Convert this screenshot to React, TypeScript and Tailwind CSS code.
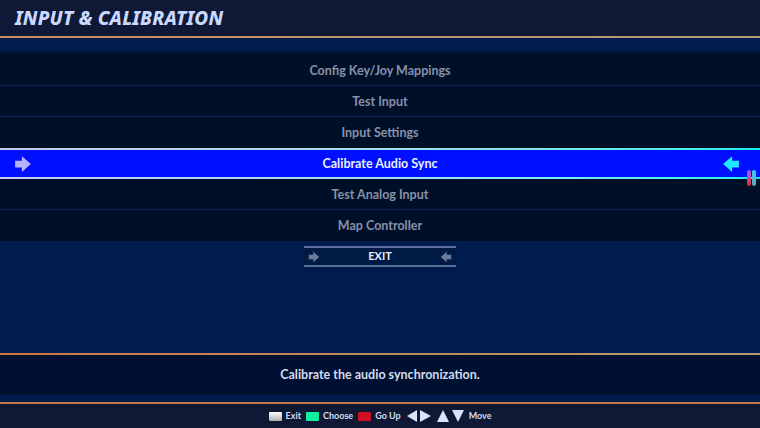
import React from "react";

// ── Input & Calibration menu screen

const items = [
  "Config Key/Joy Mappings",
  "Test Input",
  "Input Settings",
  "Calibrate Audio Sync",
  "Test Analog Input",
  "Map Controller",
];
const selected = 3;

const ArrowRight = ({ className }: { className?: string }) => (
  <svg viewBox="0 0 16 16" className={className}>
    <path d="M1 5h6V1l8 7-8 7v-4H1z" fill="currentColor" />
  </svg>
);

const ArrowLeft = ({ className }: { className?: string }) => (
  <svg viewBox="0 0 16 16" className={className}>
    <path d="M15 5H9V1L1 8l8 7v-4h6z" fill="currentColor" />
  </svg>
);

const Key = ({ color }: { color: string }) => (
  <span className={`inline-block h-[9px] w-[13px] rounded-[1px] ${color}`} />
);

const App = () => {
  return (
    <div
      className="relative flex h-[428px] w-[760px] flex-col overflow-hidden bg-[#001c4e] text-white"
      style={{ fontFamily: 'Lato, "Noto Sans", sans-serif' }}
    >
      {/* header */}
      <div className="flex h-[36px] shrink-0 items-center bg-[#0f1936] px-[15px]">
        <h1
          className="text-[19px] font-extrabold italic tracking-[0.01em] text-[#c8d8ff]"
          style={{ fontFamily: '"Noto Sans", sans-serif' }}
        >
          INPUT &amp; CALIBRATION
        </h1>
      </div>
      <div className="h-[2px] shrink-0 bg-gradient-to-r from-[#c88a64] to-[#b39c73]" />
      <div className="h-[17px] shrink-0 bg-gradient-to-b from-[#001c4e] from-70% to-[#000d26]" />

      {/* menu */}
      <div className="flex shrink-0 flex-col bg-[#000f28]">
        {items.map((label, i) =>
          i === selected ? (
            <div
              key={label}
              className="relative h-[31px] bg-gradient-to-r from-[#c8c8ff] via-[#a0e0ff] to-[#00f0ff] py-[2px]"
            >
              <div className="relative flex h-full items-center justify-center bg-[#0010ff] pt-[1px]">
                <ArrowRight className="absolute left-[14px] top-1/2 h-[18px] w-[18px] -translate-y-1/2 text-[#b4b4ff]" />
                <span className="text-[12.5px] font-bold text-[#e6f0ff]">{label}</span>
                <ArrowLeft className="absolute right-[20px] top-1/2 h-[18px] w-[18px] -translate-y-1/2 text-[#20e8ff]" />
              </div>
              <div className="absolute right-[4px] top-[22px] flex gap-[1px]">
                <span className="h-[16px] w-[4px] rounded-full bg-gradient-to-b from-[#a050ff] to-[#e01020]" />
                <span className="h-[16px] w-[4px] rounded-full bg-gradient-to-b from-[#30d0ff] to-[#60a0b0]" />
              </div>
            </div>
          ) : (
            <div
              key={label}
              className={`flex h-[31px] items-center justify-center pt-[2px] ${
                i < items.length - 1 && i !== selected - 1 ? "border-b border-[#0a2358]" : ""
              }`}
            >
              <span className="text-[12.5px] font-bold text-[#8791ab]">{label}</span>
            </div>
          )
        )}
      </div>

      {/* exit */}
      <div className="mt-[5px] flex justify-center">
        <div className="flex w-[152px] flex-col">
          <div className="h-[2px] bg-[#5a6e9c]" />
          <div className="flex h-[17px] items-center justify-between bg-[#001a46] px-[4px]">
            <ArrowRight className="h-[12px] w-[12px] text-[#6e7c9a]" />
            <span className="text-[11px] font-bold text-[#e6ecf8]">EXIT</span>
            <ArrowLeft className="h-[12px] w-[12px] text-[#6e7c9a]" />
          </div>
          <div className="h-[2px] bg-[#5a6e9c]" />
        </div>
      </div>

      <div className="flex-1" />

      {/* description */}
      <div className="h-[2px] shrink-0 bg-gradient-to-r from-[#c87846] to-[#b39c73]" />
      <div className="flex h-[40px] shrink-0 items-center justify-center bg-[#001030] pt-[1px]">
        <span className="text-[12.5px] font-bold text-[#d2dcf0]">
          Calibrate the audio synchronization.
        </span>
      </div>
      <div className="h-[7px] shrink-0 bg-[#001c4e]" />
      <div className="h-[2px] shrink-0 bg-gradient-to-r from-[#c87846] to-[#c87846]" />

      {/* footer */}
      <div className="flex h-[24px] shrink-0 items-center justify-center gap-[4px] bg-[#0f1936] text-[9px] font-bold text-[#d2dcf0]">
        <Key color="bg-gradient-to-b from-white to-[#b0b0b0]" />
        <span className="mr-[1px]">Exit</span>
        <Key color="bg-[#10f0a0]" />
        <span className="mr-[1px]">Choose</span>
        <Key color="bg-[#d01020]" />
        <span className="mr-[2px]">Go Up</span>
        <svg viewBox="0 0 24 12" className="h-[12px] w-[24px]">
          <path d="M0 6L10 0v12z" fill="#d8e4f8" />
          <path d="M24 6L13 0v12z" fill="#d8e4f8" />
        </svg>
        <svg viewBox="0 0 28 12" className="ml-[2px] h-[12px] w-[28px]">
          <path d="M6 0L12 12H0z" fill="#d8e4f8" />
          <path d="M21 12L15 0h12z" fill="#d8e4f8" />
        </svg>
        <span>Move</span>
      </div>
    </div>
  );
};

export default App;
